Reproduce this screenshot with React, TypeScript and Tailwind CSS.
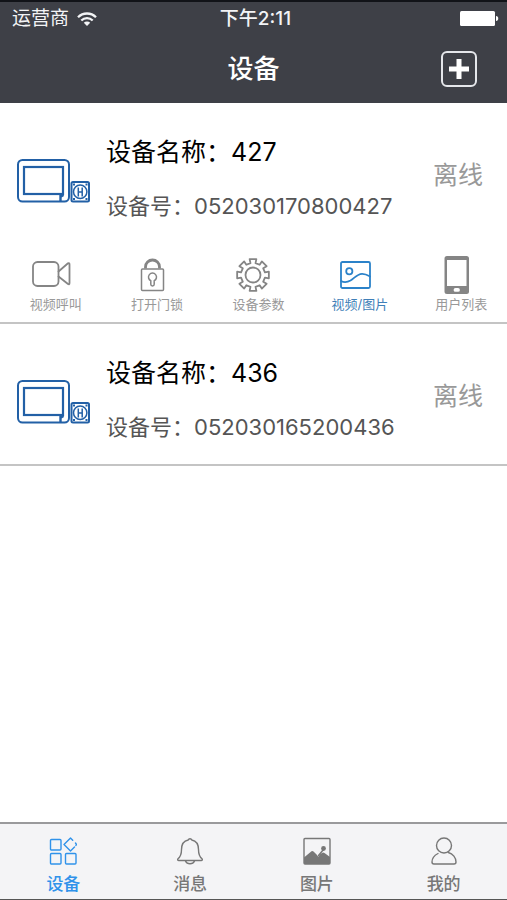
import type { ReactNode } from 'react';

interface Device {
  name: string;
  serial: string;
  status: string;
  expanded?: boolean;
}

const devices: Device[] = [
  { name: '427', serial: '052030170800427', status: '离线', expanded: true },
  { name: '436', serial: '052030165200436', status: '离线' },
];

// Outline of an 8-tooth gear centred at (20, 20)
const gearPath = () => {
  const points: string[] = [];
  for (let i = 0; i < 8; i++) {
    const steps: [number, number][] = [
      [-12, 12.2],
      [-12, 16.2],
      [12, 16.2],
      [12, 12.2],
    ];
    steps.forEach(([offset, radius]) => {
      const a = ((i * 45 + offset) * Math.PI) / 180;
      points.push(`${(20 + radius * Math.sin(a)).toFixed(2)} ${(20 - radius * Math.cos(a)).toFixed(2)}`);
    });
  }
  return `M${points.join('L')}Z`;
};

const ActionIcon = ({ children }: { children: ReactNode }) => (
  <svg
    viewBox="0 0 40 40"
    className="h-10 w-10"
    fill="none"
    stroke="currentColor"
    strokeWidth="1.8"
    strokeLinecap="round"
    strokeLinejoin="round"
    aria-hidden="true"
  >
    {children}
  </svg>
);

const TabIcon = ({ children }: { children: ReactNode }) => (
  <svg
    viewBox="0 0 28 28"
    className="h-7 w-7"
    fill="none"
    stroke="currentColor"
    strokeWidth="1.4"
    strokeLinecap="round"
    strokeLinejoin="round"
    aria-hidden="true"
  >
    {children}
  </svg>
);

const actions = [
  {
    label: '视频呼叫',
    icon: (
      <ActionIcon>
        <rect x="2" y="7" width="25.5" height="24" rx="4.5" />
        <path d="M27.5 16.5L37 8.3Q38.5 7.500 38.5 9.500V28Q38.5 30 37 29L27.5 21.5" />
      </ActionIcon>
    ),
  },
  {
    label: '打开门锁',
    icon: (
      <ActionIcon>
        <rect x="9.5" y="14" width="22" height="21.5" rx="1" strokeWidth="1.5" />
        <path d="M13.5 13.5V12a7 7 0 0 1 14 0v1.5" strokeWidth="2.8" strokeLinecap="butt" />
        <path d="M18.8 25.7a4 4 0 1 1 3.4 0v3.6a1.7 1.7 0 0 1-3.4 0z" strokeWidth="1.5" />
      </ActionIcon>
    ),
  },
  {
    label: '设备参数',
    icon: (
      <ActionIcon>
        <path d={gearPath()} />
        <circle cx="20" cy="20" r="7.5" />
      </ActionIcon>
    ),
  },
  {
    label: '视频/图片',
    active: true,
    icon: (
      <ActionIcon>
        <rect x="6" y="7" width="29" height="26" rx="1.5" />
        <circle cx="14.3" cy="16.3" r="3.1" />
        <path d="M6 26c3 1.6 6 1.5 9.5-.5C19.5 23 22 19 27 18.8c3.5-.1 5.5 1.2 8 2.7" />
      </ActionIcon>
    ),
  },
  {
    label: '用户列表',
    icon: (
      <ActionIcon>
        <path
          d="M11 1h19.5a2.5 2.5 0 0 1 2.5 2.5v33a2.5 2.5 0 0 1-2.5 2.5H11a2.5 2.5 0 0 1-2.5-2.5v-33A2.5 2.5 0 0 1 11 1zM11 5v26h19.5V5zM19.5 33a1.9 1.9 0 0 0 0 3.8H22a1.9 1.9 0 0 0 0-3.8z"
          fill="currentColor"
          fillRule="evenodd"
          stroke="none"
        />
      </ActionIcon>
    ),
  },
];

const tabs = [
  {
    label: '设备',
    active: true,
    icon: (
      <TabIcon>
        <rect x="1.5" y="2.5" width="10.5" height="10.5" rx="1" />
        <rect x="1.5" y="16.5" width="10.5" height="10.5" rx="1" />
        <rect x="16.5" y="16.5" width="10.5" height="10.5" rx="1" />
        <path d="M23.7 3.2L21.5 1 15 7.5l6.5 6.5 4-4M26.5 6l1 1.5-.6 1" />
      </TabIcon>
    ),
  },
  {
    label: '消息',
    icon: (
      <TabIcon>
        <path d="M12.2 3a1.9 1.9 0 0 1 3.6 0C20.5 4 22.5 8 22.5 12.5c0 5 1.2 7.5 3.5 9.2.7.8.3 1.8-.8 1.8H2.8c-1.1 0-1.5-1-.8-1.8 2.3-1.7 3.5-4.2 3.5-9.2C5.5 8 7.5 4 12.2 3z" />
        <path d="M9.5 24c.8 1.8 2.3 2.8 4.5 2.8s3.7-1 4.5-2.8" />
      </TabIcon>
    ),
  },
  {
    label: '图片',
    icon: (
      <TabIcon>
        <rect x="1" y="1.5" width="26" height="25.5" rx="1" />
        <path
          d="M1 20.5L8.5 14.3q1-.6 2 .2l3.3 3.3 1.5 2 2-2.8 2.2-1.3q1-.3 2 .3l5.5 4V27H1z"
          fill="currentColor"
          stroke="none"
        />
        <path d="M15.5 18.5l5-6" />
        <circle cx="20.5" cy="11.5" r="2.4" fill="currentColor" stroke="none" />
      </TabIcon>
    ),
  },
  {
    label: '我的',
    icon: (
      <TabIcon>
        <circle cx="14" cy="8.5" r="7.5" />
        <path d="M8 16.5C4.2 18.5 2 21.5 2 25c0 1.3.7 2 2 2h20c1.3 0 2-.7 2-2 0-4.2-3-8.3-7.7-9.5" />
      </TabIcon>
    ),
  },
];

const StatusBar = () => (
  <div className="grid h-[34px] grid-cols-3 items-center pr-2 pl-3 text-[19px] leading-6 text-gray-100">
    <div className="flex items-center gap-2">
      <span>运营商</span>
      <svg viewBox="0 0 20 14" className="h-[14px] w-5" fill="none" stroke="currentColor" strokeWidth="2.3" aria-hidden="true">
        <path d="M1 5.2a12.8 12.8 0 0 1 18 0" />
        <path d="M4.3 8.5a8.1 8.1 0 0 1 11.4 0" />
        <path d="M10 14L6.8 10.8a4.5 4.5 0 0 1 6.4 0z" fill="currentColor" stroke="none" />
      </svg>
    </div>
    <span className="text-center font-medium">下午2:11</span>
    <svg viewBox="0 0 39 16" className="h-4 w-[39px] justify-self-end" fill="#fff" aria-hidden="true">
      <rect x="0" y="0" width="35" height="15" rx="1.5" />
      <path d="M36 5c3 0 3 5 0 5z" />
    </svg>
  </div>
);

const Header = () => (
  <header className="border-t-2 border-[#111318] bg-[#3e4047] text-white">
    <StatusBar />
    <div className="grid grid-cols-3 items-center pt-[15px] pr-[30px] pb-4">
      <h1 className="col-start-2 pl-[30px] text-center text-[26px] leading-9 font-medium">设备</h1>
      <button
        type="button"
        aria-label="添加设备"
        className="flex h-9 w-9 items-center justify-center justify-self-end rounded-md border-2 border-gray-200"
      >
        <svg viewBox="0 0 20 20" className="h-5 w-5" fill="none" stroke="currentColor" strokeWidth="5" aria-hidden="true">
          <path d="M10 0v20M0 10h20" />
        </svg>
      </button>
    </div>
  </header>
);

// Indoor monitor with the door unit next to it
const DeviceImage = () => (
  <svg viewBox="0 0 74 44" className="mt-1 h-11 w-[74px] shrink-0 text-[#2260a6]" fill="none" stroke="currentColor" strokeWidth="2" aria-hidden="true">
    <rect x="2" y="1" width="51" height="41.5" rx="4.5" />
    <rect x="8" y="8" width="39" height="27" strokeWidth="2.2" />
    <path d="M44.5 35.5V42M47.5 36l-2.5 1.5" strokeWidth="2.4" />
    <rect x="55.5" y="23" width="17.5" height="19.5" rx="1.5" strokeWidth="2" />
    <circle cx="64.2" cy="32.8" r="6.7" strokeWidth="1.5" />
    <path d="M62.3 28.5v9M66.2 28.5v9M62.3 33h4" strokeWidth="1.5" />
    <path d="M57 25.5h2M69.5 25.5h2M57 40h2M69.5 40h2" strokeWidth="2.2" />
  </svg>
);

const DeviceItem = ({ device }: { device: Device }) => (
  <li className="border-b-2 border-[#c4c4c4]">
    <div className="flex items-center pt-8 pr-6 pb-[21px] pl-4">
      <DeviceImage />
      <div className="ml-4 flex-1">
        <h2 className="text-[25px] leading-[34px] text-black">设备名称：{device.name}</h2>
        <p className="mt-[21px] text-[22px] leading-8 text-[#555]">设备号：{device.serial}</p>
      </div>
      <span className="pb-2 text-[25px] leading-8 text-[#999]">{device.status}</span>
    </div>
    {device.expanded && (
      <div className="grid grid-cols-5 pt-3 pb-[9px]">
        {actions.map((action) => (
          <button
            key={action.label}
            type="button"
            className={`flex flex-col items-center ${action.active ? 'text-[#2b82c9]' : 'text-[#858585]'}`}
          >
            {action.icon}
            <span className={`pl-2.5 text-[13px] leading-[18px] ${action.active ? 'text-[#3f7fb8]' : 'text-[#999]'}`}>
              {action.label}
            </span>
          </button>
        ))}
      </div>
    )}
  </li>
);

const TabBar = () => (
  <nav className="grid grid-cols-4 border-t-2 border-b border-t-[#9a9a9c] border-b-[#555] bg-[#f4f4f6] pt-[13px] pb-px">
    {tabs.map((tab) => (
      <a
        key={tab.label}
        href="#"
        aria-current={tab.active ? 'page' : undefined}
        className={`flex flex-col items-center gap-1.5 ${tab.active ? 'text-[#2f92ea]' : 'text-[#777]'}`}
      >
        {tab.icon}
        <span className="text-[17px] leading-[27px] font-medium">{tab.label}</span>
      </a>
    ))}
  </nav>
);

export default function App() {
  return (
    <div className="flex min-h-screen flex-col bg-white font-['Inter','Noto_Sans_CJK_SC',sans-serif]" lang="zh-CN">
      <Header />
      <main className="flex-1">
        <ul>
          {devices.map((device) => (
            <DeviceItem key={device.serial} device={device} />
          ))}
        </ul>
      </main>
      <TabBar />
    </div>
  );
}
